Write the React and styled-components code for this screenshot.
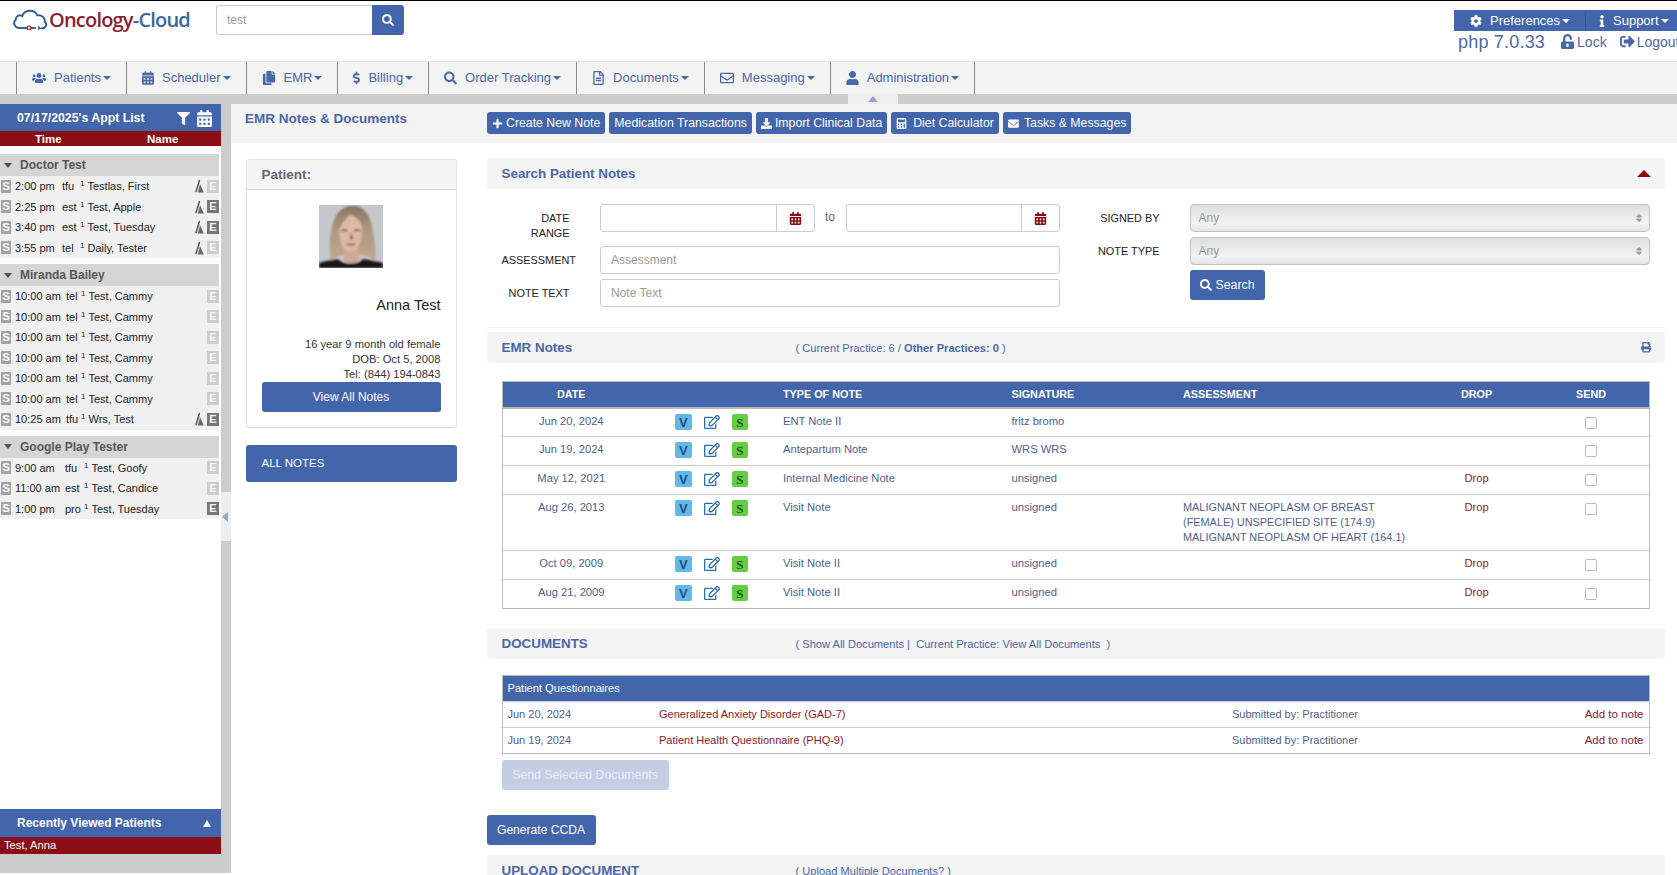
import React from 'react';
import styled, { createGlobalStyle } from 'styled-components';
import {
    FaUsers, FaCalendarAlt, FaCopy, FaDollarSign, FaSearch, FaRegFileAlt, FaRegEnvelope, FaUser,
    FaCog, FaInfo, FaUnlockAlt, FaSignOutAlt, FaFilter, FaPlus, FaDownload, FaCalculator,
    FaEnvelope, FaPrint, FaRegEdit, FaSort,
} from 'react-icons/fa';

const BLUE = '#4265ab';
const RED = '#8b0e15';
const LINK = '#4a67a8';

const GlobalStyle = createGlobalStyle`
    html, body {
        margin: 0;
        padding: 0;
        background: #fff;
        font-family: "Liberation Sans", Arial, sans-serif;
        overflow: hidden;
    }
    * { box-sizing: border-box; }
`;

const Page = styled.div`
    width: 1677px;
    height: 875px;
    overflow: hidden;
    display: flex;
    flex-direction: column;
`;

const Header = styled.header`
    height: 61px;
    border-top: 1px solid #000;
    display: flex;
    background: #fff;
`;

const Logo = styled.div`
    display: flex;
    align-items: flex-start;
    margin: 6px 0 0 12px;
    width: 204px;
`;

const LogoText = styled.span`
    font-family: "Open Sans", sans-serif;
    font-size: 20px;
    font-weight: 600;
    line-height: 25px;
    letter-spacing: -0.8px;
    color: #8a1f35;
    margin-left: 1px;
    white-space: nowrap;
    b { font-weight: 600; color: #3a679f; }
`;

const SearchBox = styled.div`
    display: flex;
    margin-top: 4px;
    height: 30px;
`;

const SearchInput = styled.input`
    width: 156px;
    height: 30px;
    border: 1px solid #ccc;
    border-right: 0;
    border-radius: 3px 0 0 3px;
    padding: 0 10px;
    font: 12px "Liberation Sans", sans-serif;
    color: #999;
`;

const SearchButton = styled.button`
    width: 32px;
    height: 30px;
    border: 0;
    border-radius: 0 3px 3px 0;
    background: ${BLUE};
    color: #fff;
    font-size: 12px;
    display: flex;
    align-items: center;
    justify-content: center;
`;

const HeaderRight = styled.div`
    margin-left: auto;
    width: 223px;
    padding-top: 9px;
    overflow: hidden;
`;

const UserBar = styled.div`
    display: flex;
    height: 21px;
    background: ${BLUE};
    color: #fff;
    font-size: 13px;
`;

const UserBarItem = styled.div`
    display: flex;
    align-items: center;
    width: ${props => props.$width}px;
    padding-left: ${props => props.$pad}px;
    gap: ${props => props.$gap}px;
    border-right: ${props => (props.$divider ? '1px solid #35528c' : '0')};
    svg { font-size: 12px; flex: none; }
`;

const UserLinks = styled.div`
    display: flex;
    align-items: center;
    color: ${LINK};
    white-space: nowrap;
    height: 22px;
`;

const Version = styled.span`
    font-size: 18px;
    margin: 0 15px 0 4px;
    letter-spacing: 0.2px;
`;

const UserLink = styled.span`
    display: flex;
    align-items: center;
    font-size: 14px;
    margin-top: -1px;
    margin-right: ${props => props.$gap || 0}px;
    svg { font-size: 15px; margin-right: 2px; }
`;

const Caret = styled.i`
    display: inline-block;
    flex: none;
    width: 0;
    height: 0;
    margin-left: ${props => (props.$gap === undefined ? 2 : props.$gap)}px;
    border-left: 4px solid transparent;
    border-right: 4px solid transparent;
    border-top: 4px solid currentColor;
`;

const Nav = styled.nav`
    height: 33px;
    border-top: 1px solid #ddd;
    background: #f3f3f3;
    display: flex;
    padding-left: 16px;
`;

const NavItem = styled.div`
    display: flex;
    align-items: center;
    padding: 0 15px 1px;
    gap: 8px;
    font-size: 13px;
    color: ${LINK};
    border-left: 1px solid #8a8a8a;
    border-right: ${props => (props.$last ? '1px solid #8a8a8a' : '0')};
    white-space: nowrap;
    svg { width: ${props => props.$icon}px; font-size: 14px; flex: none; }
`;

const Band = styled.div`
    height: 10px;
    background: #ccc;
    display: flex;
    padding-left: 848px;
    flex: none;
`;

const BandTab = styled.div`
    width: 50px;
    background: #eee;
    display: flex;
    align-items: center;
    justify-content: center;
`;

const BandArrow = styled.i`
    width: 0;
    height: 0;
    border-left: 5.5px solid transparent;
    border-right: 5.5px solid transparent;
    border-bottom: 6px solid #9a9fcb;
`;

const Body = styled.div`
    display: flex;
    flex: 1;
    min-height: 0;
`;

const Sidebar = styled.aside`
    width: 231px;
    height: 769px;
    flex: none;
    display: flex;
`;

const SideColumn = styled.div`
    width: 221px;
    display: flex;
    flex-direction: column;
`;

const Rail = styled.div`
    width: 10px;
    display: flex;
    flex-direction: column;
    background: #ccc;
`;

const RailHandle = styled.div`
    height: 49px;
    margin-top: 388px;
    background: #eee;
    display: flex;
    align-items: center;
    padding: 0 0 0 1px;
`;

const RailArrow = styled.i`
    width: 0;
    height: 0;
    border-top: 5px solid transparent;
    border-bottom: 5px solid transparent;
    border-right: 6px solid #8fa8c4;
`;

const ApptHeader = styled.div`
    height: 27px;
    background: ${BLUE};
    color: #fff;
    font-size: 12.3px;
    font-weight: 700;
    display: flex;
    align-items: center;
    padding: 1px 8px 0 17px;
`;

const ApptIcons = styled.div`
    margin-left: auto;
    display: flex;
    align-items: center;
    gap: 6px;
    svg:first-child { font-size: 13px; }
    svg:last-child { font-size: 17px; }
`;

const ColumnHeads = styled.div`
    height: 15px;
    background: ${RED};
    color: #fff;
    font-size: 11.5px;
    font-weight: 700;
    line-height: 16px;
    display: flex;
    span:first-child { margin-left: 35px; width: 112px; }
`;

const ApptList = styled.div`
    flex: 1;
    padding: 8px 2px 0 0;
`;

const Group = styled.section`
    margin-bottom: 6px;
`;

const GroupHeader = styled.div`
    height: 22px;
    background: #d5d5d5;
    color: #555;
    font-size: 12px;
    font-weight: 700;
    display: flex;
    align-items: center;
    padding-left: 4px;
    span { margin-left: 8px; }
    i { margin-left: 0; border-left-width: 4.5px; border-right-width: 4.5px; border-top-width: 5px; }
`;

const ApptRow = styled.div`
    height: 20.5px;
    background: #f0f0f0;
    display: grid;
    grid-template-columns: ${props => props.$columns} 1fr auto;
    align-items: center;
    font-size: 11px;
    color: #222;
    white-space: nowrap;
    sup { font-size: 8px; line-height: 0; margin-right: 3px; vertical-align: 4px; }
`;

const BillBadge = styled.span`
    width: 10px;
    height: 13px;
    margin-left: 1px;
    background: #a2a2a2;
    color: #fff;
    border-radius: 1px;
    font-size: 11.5px;
    font-weight: 700;
    line-height: 13px;
    text-align: center;
`;

const RowIcons = styled.span`
    display: flex;
    align-items: center;
    gap: 3px;
`;

const NoteBadge = styled.span`
    width: 12px;
    height: 13px;
    background: ${props => (props.$active ? '#777' : '#ccc')};
    color: #f6f6f6;
    font-size: 11px;
    font-weight: 700;
    line-height: 13px;
    text-align: center;
`;

const RecentHeader = styled.div`
    height: 28px;
    background: ${BLUE};
    color: #fff;
    font-size: 12px;
    font-weight: 700;
    line-height: 30px;
    display: flex;
    align-items: center;
    justify-content: space-between;
    padding: 0 10px 0 17px;
`;

const RecentArrow = styled.i`
    width: 0;
    height: 0;
    border-left: 4.5px solid transparent;
    border-right: 4.5px solid transparent;
    border-bottom: 7px solid #fff;
`;

const RecentItem = styled.div`
    height: 17px;
    background: ${RED};
    color: #fff;
    font-size: 11.2px;
    line-height: 16px;
    padding-left: 4px;
`;

const SideFoot = styled.div`
    height: 19px;
    background: #ccc;
`;

const Main = styled.main`
    flex: 1;
    min-width: 0;
`;

const Toolbar = styled.div`
    height: 39px;
    background: #f4f4f4;
    display: flex;
    align-items: flex-start;
    padding-left: 14px;
`;

const PageTitle = styled.h1`
    width: 242px;
    margin: 7px 0 0;
    font-size: 13.5px;
    line-height: 16px;
    font-weight: 700;
    color: ${LINK};
`;

const ToolbarButtons = styled.div`
    display: flex;
    gap: 4px;
    margin-top: 8px;
`;

const ToolButton = styled.button`
    height: 22px;
    padding: 0 5px;
    border: 0;
    border-radius: 3px;
    background: ${BLUE};
    color: #fff;
    font: 12.3px "Liberation Sans", sans-serif;
    display: flex;
    align-items: center;
    gap: ${props => props.$gap || 3}px;
    white-space: nowrap;
    svg { font-size: 11px; }
`;

const Content = styled.div`
    display: flex;
    padding: 15px 12px 0 14.5px;
`;

const LeftColumn = styled.div`
    width: 211px;
    flex: none;
    margin: 1px 30px 0 0;
`;

const PatientCard = styled.div`
    height: 269px;
    border: 1px solid #e3e3e3;
    border-radius: 3px;
    box-shadow: 0 1px 1px rgba(0, 0, 0, 0.05);
`;

const CardHead = styled.div`
    height: 30px;
    background: #f5f5f5;
    border-bottom: 1px solid #ddd;
    color: #667;
    font-size: 13.5px;
    font-weight: 700;
    line-height: 29px;
    padding-left: 15px;
`;

const CardBody = styled.div`
    padding: 15px 15px 0;
    text-align: right;
`;

const Portrait = styled.svg`
    display: block;
    margin: 0 auto;
`;

const PatientName = styled.div`
    margin-top: 28px;
    font-size: 14.5px;
    line-height: 18px;
    color: #222;
`;

const PatientMeta = styled.div`
    margin-top: 23px;
    font-size: 11.2px;
    line-height: 15px;
    color: #333;
`;

const WideButton = styled.button`
    display: block;
    width: 100%;
    height: 30px;
    border: 0;
    border-radius: 3px;
    background: ${BLUE};
    color: #fff;
    font: 12px "Liberation Sans", sans-serif;
`;

const AllNotes = styled.div`
    height: 37px;
    margin-top: 17px;
    border-radius: 3px;
    background: ${BLUE};
    color: #fff;
    font-size: 11.5px;
    line-height: 36px;
    padding-left: 16px;
`;

const RightColumn = styled.div`
    flex: 1;
    min-width: 0;
`;

const SectionHeader = styled.div`
    height: 31px;
    background: #f4f4f4;
    border-radius: 3px;
    display: flex;
    align-items: center;
    padding: 0 14px 0 15px;
`;

const SectionTitle = styled.h2`
    width: 294px;
    margin: 0;
    flex: none;
    font-size: 13.4px;
    font-weight: 700;
    color: ${LINK};
`;

const SectionNote = styled.span`
    font-size: 11.1px;
    color: ${LINK};
    white-space: pre;
    b { font-weight: 700; }
`;

const CollapseArrow = styled.i`
    margin-left: auto;
    width: 0;
    height: 0;
    border-left: 7px solid transparent;
    border-right: 7px solid transparent;
    border-bottom: 7px solid ${RED};
`;

const PrintIcon = styled(FaPrint)`
    margin-left: auto;
    font-size: 10.5px;
    color: ${LINK};
`;

const SearchForm = styled.form`
    display: flex;
    justify-content: space-between;
    height: 139px;
    margin-bottom: 4px;
    padding: 15px 15.5px 0 15px;
    border-bottom: 1px solid #f3f3f3;
`;

const FormBlock = styled.div`
    width: ${props => props.$width}px;
    display: grid;
    grid-template-columns: ${props => props.$label}px 1fr;
    align-content: start;
    row-gap: ${props => props.$gap}px;
`;

const FormLabel = styled.label`
    width: ${props => props.$width}px;
    align-self: center;
    justify-self: start;
    font-size: 10.9px;
    line-height: 15px;
    color: #222;
    text-align: right;
    text-transform: uppercase;
    white-space: nowrap;
`;

const RangeLabel = styled(FormLabel)`
    align-self: start;
    white-space: normal;
    margin-top: 6.5px;
`;

const DateRange = styled.div`
    display: flex;
    align-items: flex-start;
    margin-bottom: ${props => props.$gap}px;
`;

const DateField = styled.div`
    display: flex;
    width: 214.5px;
    height: 28px;
    border: 1px solid #ccc;
    border-radius: 3px;
`;

const DateInput = styled.input`
    flex: 1;
    min-width: 0;
    border: 0;
    background: transparent;
`;

const DateAddon = styled.span`
    width: 38px;
    border-left: 1px solid #ccc;
    color: ${RED};
    font-size: 13px;
    display: flex;
    align-items: center;
    justify-content: center;
`;

const ToWord = styled.span`
    width: 31px;
    text-align: center;
    font-size: 12px;
    line-height: 26px;
    color: #666;
`;

const TextInput = styled.input`
    height: 28px;
    border: 1px solid #ccc;
    border-radius: 3px;
    padding: 0 10px;
    font: 12px "Liberation Sans", sans-serif;
    color: #444;
    &::placeholder { color: #999; opacity: 1; }
`;

const SelectWrap = styled.div`
    position: relative;
    height: 28px;
    border: 1px solid #c4c4c4;
    border-radius: 4px;
    background: linear-gradient(#dedede, #f3f3f3 70%, #e4e4e4);
    color: #999;
    font-size: 12px;
    line-height: 26px;
    padding-left: 8px;
    svg {
        position: absolute;
        right: 5px;
        top: 8px;
        font-size: 10px;
        color: #999;
    }
`;

const SearchSubmit = styled.button`
    grid-column: 2;
    justify-self: start;
    width: 75px;
    height: 30px;
    border: 0;
    border-radius: 3px;
    background: ${BLUE};
    color: #fff;
    font: 12.3px "Liberation Sans", sans-serif;
    display: flex;
    align-items: center;
    justify-content: center;
    gap: 4px;
    svg { font-size: 12px; }
`;

const TableWrap = styled.div`
    padding: ${props => props.$top}px 15.5px 0 15px;
`;

const SectionEnd = styled.div`
    height: ${props => props.$height}px;
    border-bottom: 1px solid #f6f6f6;
    margin-bottom: 3px;
`;

const Table = styled.table`
    width: 100%;
    table-layout: fixed;
    border-collapse: collapse;
    border: 1px solid #bbb;
    font-size: 11.2px;
    line-height: 15px;
    color: #4f6090;
`;

const Th = styled.th`
    height: 26px;
    padding: 0;
    background: ${BLUE};
    color: #fff;
    font-size: 10.8px;
    font-weight: 700;
    text-transform: uppercase;
    text-align: ${props => props.$align || 'left'};
`;

const Tr = styled.tr`
    border-top: ${props => (props.$first ? '2px solid #bbb' : '1px solid #ccc')};
`;

const Td = styled.td`
    height: 29px;
    padding: 5px 0;
    vertical-align: top;
    text-align: ${props => props.$align || 'left'};
    color: ${props => (props.$red ? '#8b1a2b' : 'inherit')};
`;

const Diagnosis = styled.div`
    font-size: 10.9px;
`;

const NoteActions = styled.div`
    display: flex;
    align-items: center;
    gap: 12px;
    padding-left: 35px;
    height: 16px;
`;

const LetterBadge = styled.span`
    width: 16.5px;
    height: 16px;
    border-radius: 2px;
    background: ${props => props.$bg};
    color: ${props => props.$color};
    font-family: ${props => (props.$serif ? '"Liberation Serif", serif' : '"Liberation Sans", sans-serif')};
    font-size: 13px;
    font-weight: 700;
    line-height: 17px;
    text-align: center;
`;

const EditIcon = styled(FaRegEdit)`
    font-size: 16px;
    color: #2f6fa8;
`;

const SendBox = styled.input.attrs({ type: 'checkbox' })`
    appearance: none;
    display: block;
    width: 12px;
    height: 12px;
    margin: 3px auto 0;
    border: 1px solid #bbb;
    border-radius: 2px;
    background: #fff;
`;

const QuestionnaireTable = styled(Table)`
    font-size: 11px;
    th { padding-left: 5px; font-size: 11.1px; font-weight: 400; text-transform: none; }
    td { height: 26px; padding: 5px 0 0; }
    td:first-child { padding-left: 5px; }
    td:last-child { padding-right: 5px; font-size: 11.5px; }
`;

const SendDocs = styled.button`
    display: block;
    width: 167px;
    height: 30px;
    margin-top: 6px;
    padding: 0;
    border: 0;
    border-radius: 3px;
    background: #c4cde4;
    color: #e8ecf5;
    font: 12.3px "Liberation Sans", sans-serif;
`;

const CcdaButton = styled.button`
    display: block;
    width: 109px;
    height: 30px;
    margin: 25px 0 10px;
    padding: 0;
    border: 0;
    border-radius: 3px;
    background: ${BLUE};
    color: #fff;
    font: 12.1px "Liberation Sans", sans-serif;
`;

const appointmentGroups = [
    {
        name: 'Doctor Test',
        columns: '15px 47px 18px',
        rows: [
            ['2:00 pm', 'tfu', 'Testlas, First', true, false],
            ['2:25 pm', 'est', 'Test, Apple', true, true],
            ['3:40 pm', 'est', 'Test, Tuesday', true, true],
            ['3:55 pm', 'tel', 'Daily, Tester', true, false],
        ],
    },
    {
        name: 'Miranda Bailey',
        columns: '15px 51px 15px',
        rows: [
            ...Array(6).fill(['10:00 am', 'tel', 'Test, Cammy', false, false]),
            ['10:25 am', 'tfu', 'Wrs, Test', true, true],
        ],
    },
    {
        name: 'Google Play Tester',
        columns: '15px 50px 19px',
        rows: [
            ['9:00 am', 'tfu', 'Test, Goofy', false, false],
            ['11:00 am', 'est', 'Test, Candice', false, false],
            ['1:00 pm', 'pro', 'Test, Tuesday', false, true],
        ],
    },
];

const notes = [
    { date: 'Jun 20, 2024', type: 'ENT Note II', signature: 'fritz bromo' },
    { date: 'Jun 19, 2024', type: 'Antepartum Note', signature: 'WRS WRS' },
    { date: 'May 12, 2021', type: 'Internal Medicine Note', signature: 'unsigned', drop: true },
    {
        date: 'Aug 26, 2013',
        type: 'Visit Note',
        signature: 'unsigned',
        drop: true,
        assessment: ['MALIGNANT NEOPLASM OF BREAST (FEMALE) UNSPECIFIED SITE (174.9)', 'MALIGNANT NEOPLASM OF HEART (164.1)'],
    },
    { date: 'Oct 09, 2009', type: 'Visit Note II', signature: 'unsigned', drop: true },
    { date: 'Aug 21, 2009', type: 'Visit Note II', signature: 'unsigned', drop: true },
];

const questionnaires = [
    ['Jun 20, 2024', 'Generalized Anxiety Disorder (GAD-7)'],
    ['Jun 19, 2024', 'Patient Health Questionnaire (PHQ-9)'],
];

const navItems = [
    [FaUsers, 'Patients', 14],
    [FaCalendarAlt, 'Scheduler', 12],
    [FaCopy, 'EMR', 14],
    [FaDollarSign, 'Billing', 7],
    [FaSearch, 'Order Tracking', 13],
    [FaRegFileAlt, 'Documents', 13],
    [FaRegEnvelope, 'Messaging', 14],
    [FaUser, 'Administration', 13],
];

const CloudLogo = () => (
    <svg width="36" height="22" viewBox="0 0 36 22" fill="none" style={{ flex: 'none', marginTop: 1 }}>
        <path d="M15 20H7.5C2.5 20 .5 14.5 3.8 11.8 3.6 8 7.5 6.2 10.3 8.2 12.3 1.5 22.5.8 25.3 7.4 30 6.5 33.6 10.3 32.6 13.6 35.6 15.6 34.4 20.6 29 20.4" stroke="#2f6199" strokeWidth="1.9" strokeLinecap="round" />
        <path d="M19 20h5" stroke="#2f6199" strokeWidth="1.9" />
        <circle cx="17" cy="20" r="1.9" fill="#fff" stroke="#a3263a" strokeWidth="1.4" />
        <path d="M26 17.5l3 3-3 1.4z" fill="#2f6199" />
    </svg>
);

const AlertIcon = () => (
    <svg width="9" height="14" viewBox="0 0 9 14" fill="none">
        <path d="M.8 13.2L4.6 1" stroke="#444" strokeWidth="1.3" />
        <path d="M5 5L8.8 13.5H2.8z" fill="#666" />
    </svg>
);

const PatientPortrait = () => (
    <Portrait width="64" height="63" viewBox="0 0 64 63">
        <defs>
            <filter id="soft" x="-10%" y="-10%" width="120%" height="120%"><feGaussianBlur stdDeviation="0.9" /></filter>
            <linearGradient id="hair" x1="0" y1="0" x2="0" y2="1">
                <stop offset="0" stopColor="#8a7363" />
                <stop offset="0.45" stopColor="#b09880" />
                <stop offset="1" stopColor="#bfa98f" />
            </linearGradient>
        </defs>
        <rect width="64" height="63" fill="#c5c8cb" />
        <g filter="url(#soft)">
            <path d="M12 57C9 44 11 22 17 11 21 3 30 0 37 1 46 3 51 11 53 22 55 34 58 46 56 57 52 52 47 50 40 50H24C20 51 15 53 12 57z" fill="url(#hair)" />
            <path d="M25 44h15v12c-4 3-11 3-15 0z" fill="#cfa994" />
            <path d="M20 24C20 15 25 10 32 10 38 12 43 17 43 25 43 36 39 46 32 47 25 47 20 37 20 24z" fill="#dcbaa6" />
            <path d="M24 12C28 9 31 8 33 8 29 12 23 17 20 25 19 20 21 15 24 12z" fill="#a58c74" />
            <path d="M22.5 26c2-1.2 4.5-1.2 6 0M35 26c2-1.2 4-1.2 6 0" stroke="#5e483b" strokeWidth="1.5" />
            <path d="M27.5 39c3 1.2 6 1.2 8.5-.2" stroke="#a9625e" strokeWidth="1.9" />
            <path d="M32 28l-1 6 3 .4" stroke="#c39d88" strokeWidth="1.2" />
            <path d="M0 63v-5c5-2 12-3 19-4 4 6 21 6 25 0 7 1 14 2 20 4v5z" fill="#141414" />
        </g>
    </Portrait>
);

const App = () => (
    <Page>
        <GlobalStyle />
        <Header>
            <Logo>
                <CloudLogo />
                <LogoText>Oncology<b>-Cloud</b></LogoText>
            </Logo>
            <SearchBox>
                <SearchInput defaultValue="test" />
                <SearchButton><FaSearch /></SearchButton>
            </SearchBox>
            <HeaderRight>
                <UserBar>
                    <UserBarItem $width={132} $pad={16} $gap={8} $divider>
                        <FaCog />
                        <span>Preferences</span>
                        <Caret $gap={-6} />
                    </UserBarItem>
                    <UserBarItem $width={91} $pad={10} $gap={5}>
                        <FaInfo />
                        <span>Support</span>
                        <Caret $gap={-3} />
                    </UserBarItem>
                </UserBar>
                <UserLinks>
                    <Version>php 7.0.33</Version>
                    <UserLink $gap={13}><FaUnlockAlt />Lock</UserLink>
                    <UserLink><FaSignOutAlt />Logout</UserLink>
                </UserLinks>
            </HeaderRight>
        </Header>

        <Nav>
            {navItems.map(([Icon, label, iconWidth], i) => (
                <NavItem key={label} $icon={iconWidth} $last={i === navItems.length - 1}>
                    <Icon />
                    <span>{label}</span>
                    <Caret $gap={-6} />
                </NavItem>
            ))}
        </Nav>
        <Band>
            <BandTab><BandArrow /></BandTab>
        </Band>

        <Body>
            <Sidebar>
                <SideColumn>
                    <ApptHeader>
                        07/17/2025's Appt List
                        <ApptIcons><FaFilter /><FaCalendarAlt /></ApptIcons>
                    </ApptHeader>
                    <ColumnHeads><span>Time</span><span>Name</span></ColumnHeads>
                    <ApptList>
                        {appointmentGroups.map(group => (
                            <Group key={group.name}>
                                <GroupHeader><Caret /><span>{group.name}</span></GroupHeader>
                                {group.rows.map(([time, kind, name, alert, active], i) => (
                                    <ApptRow key={i} $columns={group.columns}>
                                        <BillBadge>S</BillBadge>
                                        <span>{time}</span>
                                        <span>{kind}</span>
                                        <span><sup>1</sup>{name}</span>
                                        <RowIcons>
                                            {alert && <AlertIcon />}
                                            <NoteBadge $active={active}>E</NoteBadge>
                                        </RowIcons>
                                    </ApptRow>
                                ))}
                            </Group>
                        ))}
                    </ApptList>
                    <RecentHeader>Recently Viewed Patients<RecentArrow /></RecentHeader>
                    <RecentItem>Test, Anna</RecentItem>
                    <SideFoot />
                </SideColumn>
                <Rail>
                    <RailHandle><RailArrow /></RailHandle>
                </Rail>
            </Sidebar>

            <Main>
                <Toolbar>
                    <PageTitle>EMR Notes &amp; Documents</PageTitle>
                    <ToolbarButtons>
                        <ToolButton><FaPlus />Create New Note</ToolButton>
                        <ToolButton>Medication Transactions</ToolButton>
                        <ToolButton><FaDownload />Import Clinical Data</ToolButton>
                        <ToolButton $gap={6}><FaCalculator />Diet Calculator</ToolButton>
                        <ToolButton $gap={5}><FaEnvelope />Tasks &amp; Messages</ToolButton>
                    </ToolbarButtons>
                </Toolbar>

                <Content>
                    <LeftColumn>
                        <PatientCard>
                            <CardHead>Patient:</CardHead>
                            <CardBody>
                                <PatientPortrait />
                                <PatientName>Anna Test</PatientName>
                                <PatientMeta>
                                    16 year 9 month old female<br />
                                    DOB: Oct 5, 2008<br />
                                    Tel: (844) 194-0843
                                </PatientMeta>
                                <WideButton>View All Notes</WideButton>
                            </CardBody>
                        </PatientCard>
                        <AllNotes>ALL NOTES</AllNotes>
                    </LeftColumn>

                    <RightColumn>
                        <SectionHeader>
                            <SectionTitle>Search Patient Notes</SectionTitle>
                            <CollapseArrow />
                        </SectionHeader>
                        <SearchForm>
                            <FormBlock $width={558.5} $label={98.5} $gap={5}>
                                <RangeLabel $width={68}>Date Range</RangeLabel>
                                <DateRange $gap={9}>
                                    <DateField><DateInput /><DateAddon><FaCalendarAlt /></DateAddon></DateField>
                                    <ToWord>to</ToWord>
                                    <DateField><DateInput /><DateAddon><FaCalendarAlt /></DateAddon></DateField>
                                </DateRange>
                                <FormLabel $width={74}>Assessment</FormLabel>
                                <TextInput placeholder="Assessment" />
                                <FormLabel $width={68}>Note Text</FormLabel>
                                <TextInput placeholder="Note Text" />
                            </FormBlock>
                            <FormBlock $width={559} $label={99} $gap={5}>
                                <FormLabel $width={69}>Signed By</FormLabel>
                                <SelectWrap>Any<FaSort /></SelectWrap>
                                <FormLabel $width={69}>Note Type</FormLabel>
                                <SelectWrap>Any<FaSort /></SelectWrap>
                                <SearchSubmit><FaSearch />Search</SearchSubmit>
                            </FormBlock>
                        </SearchForm>

                        <SectionHeader>
                            <SectionTitle>EMR Notes</SectionTitle>
                            <SectionNote>( Current Practice: 6 / <b>Other Practices: 0</b> )</SectionNote>
                            <PrintIcon />
                        </SectionHeader>
                        <TableWrap $top={18}>
                            <Table>
                                <colgroup>
                                    <col width="138" />
                                    <col width="143" />
                                    <col width="228.5" />
                                    <col width="171.5" />
                                    <col width="237" />
                                    <col width="113" />
                                    <col width="116.5" />
                                </colgroup>
                                <thead>
                                    <tr>
                                        <Th $align="center">Date</Th>
                                        <Th />
                                        <Th>Type of Note</Th>
                                        <Th>Signature</Th>
                                        <Th>Assessment</Th>
                                        <Th $align="center">Drop</Th>
                                        <Th $align="center">Send</Th>
                                    </tr>
                                </thead>
                                <tbody>
                                    {notes.map((note, i) => (
                                        <Tr key={note.date} $first={i === 0}>
                                            <Td $align="center">{note.date}</Td>
                                            <Td>
                                                <NoteActions>
                                                    <LetterBadge $bg="#63b8e8" $color="#1f4f7a">V</LetterBadge>
                                                    <EditIcon />
                                                    <LetterBadge $bg="#66cc44" $color="#1d4d1a" $serif>S</LetterBadge>
                                                </NoteActions>
                                            </Td>
                                            <Td>{note.type}</Td>
                                            <Td>{note.signature}</Td>
                                            <Td>{note.assessment && note.assessment.map(a => <Diagnosis key={a}>{a}</Diagnosis>)}</Td>
                                            <Td $align="center" $red>{note.drop && 'Drop'}</Td>
                                            <Td $align="center"><SendBox /></Td>
                                        </Tr>
                                    ))}
                                </tbody>
                            </Table>
                        </TableWrap>
                        <SectionEnd $height={16} />

                        <SectionHeader>
                            <SectionTitle>DOCUMENTS</SectionTitle>
                            <SectionNote>( Show All Documents |  Current Practice: View All Documents  )</SectionNote>
                        </SectionHeader>
                        <TableWrap $top={16}>
                            <QuestionnaireTable>
                                <colgroup>
                                    <col width="157" />
                                    <col width="573" />
                                    <col />
                                    <col width="120" />
                                </colgroup>
                                <thead>
                                    <tr><Th colSpan="4">Patient Questionnaires</Th></tr>
                                </thead>
                                <tbody>
                                    {questionnaires.map(([date, title]) => (
                                        <Tr key={date}>
                                            <Td>{date}</Td>
                                            <Td $red>{title}</Td>
                                            <Td>Submitted by: Practitioner</Td>
                                            <Td $red $align="right">Add to note</Td>
                                        </Tr>
                                    ))}
                                </tbody>
                            </QuestionnaireTable>
                            <SendDocs>Send Selected Documents</SendDocs>
                        </TableWrap>
                        <CcdaButton>Generate CCDA</CcdaButton>
                        <SectionHeader>
                            <SectionTitle>UPLOAD DOCUMENT</SectionTitle>
                            <SectionNote>( Upload Multiple Documents? )</SectionNote>
                        </SectionHeader>
                    </RightColumn>
                </Content>
            </Main>
        </Body>
    </Page>
);

export default App;
